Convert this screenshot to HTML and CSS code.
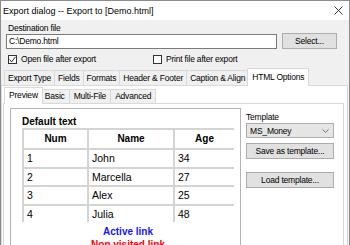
FILE: index.html
```html
<!DOCTYPE html>
<html lang="en">
<head>
    <meta charset="UTF-8">
    <meta name="viewport" content="width=device-width, initial-scale=1.0">
    <title>Export dialog</title>
    <link rel="stylesheet" href="styles.css">
</head>
<body>
    <div class="window">
        <div class="titlebar">
            <span class="title">Export dialog -- Export to [Demo.html]</span>
            <svg class="close" width="9" height="9" viewBox="0 0 9 9">
                <path d="M0.5 0.5 L8.5 8.5 M8.5 0.5 L0.5 8.5" stroke="#222" stroke-width="0.9" fill="none"/>
            </svg>
        </div>

        <div class="top">
            <div class="label">Destination file</div>
            <div class="file-row">
                <div class="input">C:\Demo.html</div>
                <div class="button select">Select...</div>
            </div>
            <div class="check-row">
                <div class="check-item">
                    <span class="checkbox">
                        <svg width="7" height="7" viewBox="0 0 7 7">
                            <path d="M0.6 3.6 L2.6 5.8 L6.5 0.8" stroke="#222" stroke-width="1" fill="none"/>
                        </svg>
                    </span>
                    Open file after export
                </div>
                <div class="check-item second">
                    <span class="checkbox"></span>
                    Print file after export
                </div>
            </div>
        </div>

        <div class="tabs main-tabs">
            <div class="tab">Export Type</div>
            <div class="tab">Fields</div>
            <div class="tab">Formats</div>
            <div class="tab">Header &amp; Footer</div>
            <div class="tab">Caption &amp; Align</div>
            <div class="tab active">HTML Options</div>
        </div>

        <div class="main-panel">
            <div class="tabs sub-tabs">
                <div class="tab active">Preview</div>
                <div class="tab">Basic</div>
                <div class="tab">Multi-File</div>
                <div class="tab">Advanced</div>
            </div>

            <div class="sub-panel">
                <div class="preview">
                    <div class="preview-title">Default text</div>
                    <table class="grid">
                        <tr><th class="c1">Num</th><th class="c2">Name</th><th class="c3">Age</th></tr>
                        <tr><td>1</td><td>John</td><td>34</td></tr>
                        <tr><td>2</td><td>Marcella</td><td>27</td></tr>
                        <tr><td>3</td><td>Alex</td><td>25</td></tr>
                        <tr><td>4</td><td>Julia</td><td>48</td></tr>
                    </table>
                    <div class="links">
                        <div class="link-active">Active link</div>
                        <div class="link-new">Non visited link</div>
                    </div>
                </div>

                <div class="side">
                    <div class="label">Template</div>
                    <div class="combo">
                        <span>MS_Money</span>
                        <svg width="7" height="4" viewBox="0 0 7 4">
                            <path d="M0.5 0.5 L3.5 3.3 L6.5 0.5" stroke="#666" stroke-width="0.9" fill="none"/>
                        </svg>
                    </div>
                    <div class="button save">Save as template...</div>
                    <div class="button load">Load template...</div>
                </div>
            </div>
        </div>
    </div>
</body>
</html>
```

FILE: styles.css
```css
body {
    margin: 0;
    background-color: #ffffff;
}

.window {
    width: 350px;
    height: 245px;
    overflow: hidden;
    box-sizing: border-box;
    border: 1px solid #8c8c8c;
    border-bottom: none;
    background-color: #f0f0f0;
    font-family: "Liberation Sans", Arial, sans-serif;
    font-size: 8.5px;
    letter-spacing: -0.2px;
    color: #000000;
}

.titlebar {
    height: 19px;
    background-color: #ffffff;
    display: flex;
    align-items: center;
    justify-content: space-between;
    padding-left: 2px;
}

.title {
    font-size: 9px;
    letter-spacing: 0;
}

.close {
    margin-right: 6px;
}

.top {
    padding: 3px 5px 0 5px;
}

.label {
    line-height: 10px;
    padding-left: 2px;
}

.file-row {
    display: flex;
}

.input {
    width: 271px;
    height: 15px;
    margin-top: 1px;
    box-sizing: border-box;
    border: 1px solid #7a7a7a;
    background-color: #ffffff;
    padding-left: 2px;
    line-height: 13px;
}

.button {
    height: 16px;
    box-sizing: border-box;
    border: 1px solid #adadad;
    background-color: #e1e1e1;
    text-align: center;
    line-height: 14px;
}

.select {
    width: 55px;
    margin-left: 5px;
}

.check-row {
    display: flex;
    margin-top: 5px;
    height: 10px;
    align-items: center;
}

.check-item {
    display: flex;
    align-items: center;
    padding-left: 2px;
}

.check-item.second {
    margin-left: 55px;
}

.checkbox {
    width: 9px;
    height: 9px;
    box-sizing: border-box;
    border: 1px solid #333333;
    background-color: #ffffff;
    margin-right: 4px;
    display: flex;
    align-items: center;
    justify-content: center;
}

.tabs {
    display: flex;
    align-items: flex-end;
}

.tab {
    position: relative;
    height: 15px;
    box-sizing: border-box;
    border: 1px solid #d9d9d9;
    border-bottom: none;
    margin-left: -1px;
    padding: 0 3px;
    line-height: 14px;
    background-color: #f0f0f0;
    white-space: nowrap;
}

.tab.active {
    height: 18px;
    background-color: #ffffff;
    margin-left: -2px;
    margin-right: -2px;
    margin-bottom: -1px;
    padding: 0 4px;
    line-height: 16px;
    z-index: 1;
}

.main-tabs {
    height: 21px;
    padding-left: 3px;
}

.main-tabs .tab:first-child {
    margin-left: 0;
}

.main-panel {
    position: relative;
    height: 170px;
    margin-right: 1px;
    border: 1px solid #d9d9d9;
    background-color: #ffffff;
}

.sub-tabs {
    height: 17px;
    padding-left: 2px;
}

.sub-tabs .tab {
    height: 14px;
    line-height: 13px;
    padding: 0 4px;
}

.sub-tabs .tab.active {
    height: 17px;
    line-height: 15px;
    margin-left: 0;
}

.sub-panel {
    display: flex;
    align-items: flex-start;
    margin: 0 3px 0 1px;
    height: 160px;
    border: 1px solid #d9d9d9;
    padding: 4px 0 0 6px;
}

.preview {
    width: 231px;
    height: 160px;
    flex-shrink: 0;
    box-sizing: border-box;
    border: 1px solid #b4b4b4;
    padding: 7px 0 0 11px;
    letter-spacing: 0;
}

.preview-title {
    font-size: 10px;
    font-weight: bold;
    line-height: 12px;
}

.grid {
    width: 212px;
    border-collapse: separate;
    border-spacing: 0;
    font-size: 10.5px;
}

.grid th,
.grid td {
    border-left: 2px solid #d4d4d4;
    border-top: 2px solid #d4d4d4;
    padding: 0 3px;
}

.grid th {
    font-size: 10px;
    line-height: 18px;
    text-align: center;
}

.grid td {
    line-height: 16.5px;
    text-align: left;
}

.c1 { width: 57px; }
.c2 { width: 78px; }

.links {
    width: 212px;
    margin-top: 3px;
    text-align: center;
    font-size: 10px;
    font-weight: bold;
    line-height: 13px;
}

.link-active {
    color: #1414ff;
}

.link-new {
    color: #ff0000;
}

.side {
    width: 88px;
    margin-left: 5px;
    padding-top: 4px;
}

.side .label {
    padding-left: 0;
    margin-bottom: 1px;
}

.combo {
    height: 15px;
    box-sizing: border-box;
    border: 1px solid #adadad;
    background-color: #e5e5e5;
    display: flex;
    align-items: center;
    justify-content: space-between;
    padding: 0 4px 0 3px;
}

.save {
    margin-top: 5px;
}

.load {
    margin-top: 13px;
}
```
